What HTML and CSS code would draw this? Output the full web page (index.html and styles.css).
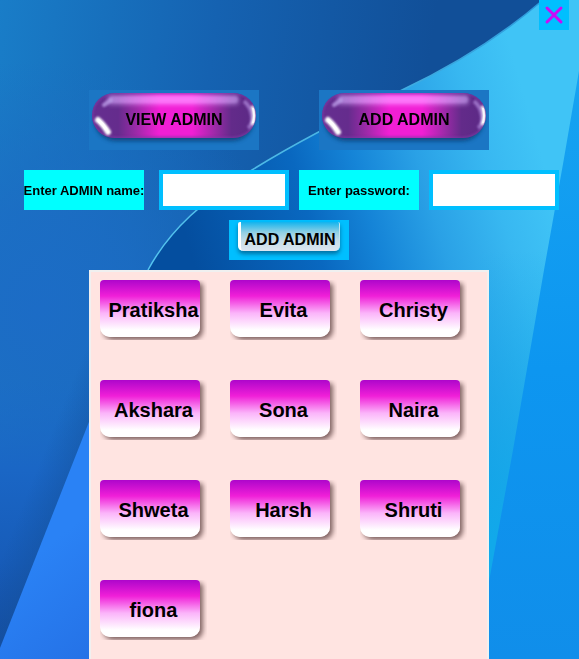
FILE: index.html
```html
<!DOCTYPE html>
<html lang="en">
<head>
<meta charset="utf-8">
<title>Admin</title>
<link rel="stylesheet" href="styles.css">
</head>
<body>
<svg class="backdrop" viewBox="0 0 579 659" preserveAspectRatio="none" aria-hidden="true">
  <defs>
    <linearGradient id="sky" x1="0" y1="0" x2="430" y2="60" gradientUnits="userSpaceOnUse">
      <stop offset="0" stop-color="#197dc8"/>
      <stop offset="0.5" stop-color="#1562b1"/>
      <stop offset="1" stop-color="#114f98"/>
    </linearGradient>
    <radialGradient id="leftGlow" cx="40" cy="310" r="250" gradientUnits="userSpaceOnUse">
      <stop offset="0" stop-color="#1c6cc6"/>
      <stop offset="0.4" stop-color="#1c6cc4" stop-opacity="0.8"/>
      <stop offset="1" stop-color="#1c6cc0" stop-opacity="0"/>
    </radialGradient>
    <linearGradient id="leftLow" x1="0" y1="380" x2="0" y2="640" gradientUnits="userSpaceOnUse">
      <stop offset="0" stop-color="#1c69c9" stop-opacity="0"/>
      <stop offset="0.35" stop-color="#1a66c5"/>
      <stop offset="0.7" stop-color="#175cb9"/>
      <stop offset="1" stop-color="#154fa5"/>
    </linearGradient>
    <linearGradient id="foldLow" x1="16" y1="520" x2="58" y2="537" gradientUnits="userSpaceOnUse">
      <stop offset="0" stop-color="#12509c" stop-opacity="0"/>
      <stop offset="1" stop-color="#155098" stop-opacity="0.6"/>
    </linearGradient>
    <linearGradient id="wave" x1="190" y1="250" x2="540" y2="150" gradientUnits="userSpaceOnUse">
      <stop offset="0" stop-color="#044e9f"/>
      <stop offset="0.34" stop-color="#0968c0"/>
      <stop offset="0.5" stop-color="#1584d7"/>
      <stop offset="0.67" stop-color="#2aa1e6"/>
      <stop offset="0.85" stop-color="#38b8f1"/>
      <stop offset="1" stop-color="#40c4f6"/>
    </linearGradient>
    <linearGradient id="waveLow" x1="0" y1="250" x2="0" y2="540" gradientUnits="userSpaceOnUse">
      <stop offset="0" stop-color="#11a9ea" stop-opacity="0"/>
      <stop offset="1" stop-color="#11a9ea"/>
    </linearGradient>
    <linearGradient id="right" x1="0" y1="80" x2="0" y2="659" gradientUnits="userSpaceOnUse">
      <stop offset="0" stop-color="#16a3f1"/>
      <stop offset="0.5" stop-color="#0d96f0"/>
      <stop offset="1" stop-color="#108eea"/>
    </linearGradient>
    <linearGradient id="wedge" x1="30" y1="560" x2="110" y2="659" gradientUnits="userSpaceOnUse">
      <stop offset="0" stop-color="#2a82f5"/>
      <stop offset="1" stop-color="#2470e5"/>
    </linearGradient>
    <linearGradient id="rim" x1="540" y1="0" x2="149" y2="270" gradientUnits="userSpaceOnUse">
      <stop offset="0" stop-color="#2c9bdc"/>
      <stop offset="0.5" stop-color="#49b4e2"/>
      <stop offset="1" stop-color="#54c4ef"/>
    </linearGradient>
  </defs>
  <rect width="579" height="659" fill="url(#sky)"/>
  <rect width="579" height="659" fill="url(#leftGlow)"/>
  <rect y="300" width="200" height="359" fill="url(#leftLow)"/>
  <path d="M0 280H150L0 659Z" fill="url(#foldLow)"/>
  <path d="M543 0C500 37 455 65 402 90C350 115 300 140 252 170C205 199 170 229 148 270V659H579V0Z" fill="url(#wave)"/>
  <path d="M480 230H560L480 630Z" fill="url(#waveLow)"/>
  <path d="M543 0C500 37 455 65 402 90C350 115 300 140 252 170C205 199 170 229 148 270" fill="none" stroke="url(#rim)" stroke-width="1.5"/>
  <path d="M579 71L563 164L544 270L513 450L490 576L474 659H579Z" fill="url(#right)"/>
  <path d="M98 399L0 648V659H150V399Z" fill="url(#wedge)"/>
</svg>

<svg class="defs" aria-hidden="true">
  <defs>
    <linearGradient id="pillFill">
      <stop offset="0" stop-color="#652e90"/>
      <stop offset="0.16" stop-color="#652c8d"/>
      <stop offset="0.27" stop-color="#9c2aa8"/>
      <stop offset="0.41" stop-color="#f11fd5"/>
      <stop offset="0.61" stop-color="#f11fd5"/>
      <stop offset="0.75" stop-color="#9c2aa8"/>
      <stop offset="0.85" stop-color="#632b8a"/>
      <stop offset="1" stop-color="#5b2985"/>
    </linearGradient>
    <linearGradient id="pillShine">
      <stop offset="0" stop-color="#c9a4f4" stop-opacity="0.7"/>
      <stop offset="0.4" stop-color="#ff84ff"/>
      <stop offset="0.65" stop-color="#ff84ff"/>
      <stop offset="1" stop-color="#c9a4f4" stop-opacity="0.7"/>
    </linearGradient>
    <filter id="soft1" x="0" y="0" width="170" height="60" filterUnits="userSpaceOnUse"><feGaussianBlur stdDeviation="1"/></filter>
    <filter id="soft2" x="0" y="0" width="170" height="60" filterUnits="userSpaceOnUse"><feGaussianBlur stdDeviation="2"/></filter>
    <clipPath id="pillClip"><rect x="3" y="3" width="164" height="45" rx="22.5"/></clipPath>
    <symbol id="pill" viewBox="0 0 170 60">
      <rect x="5" y="7" width="160" height="44" rx="22" fill="#0c3f75" opacity="0.85" filter="url(#soft2)"/>
      <rect x="3" y="3" width="164" height="45" rx="22.5" fill="url(#pillFill)"/>
      <g clip-path="url(#pillClip)">
        <rect x="3" y="3" width="164" height="45" rx="22.5" fill="none" stroke="#7d3aa5" stroke-width="3" opacity="0.7" filter="url(#soft1)"/>
        <rect x="18" y="5" width="132" height="10" rx="4" fill="url(#pillShine)" opacity="0.7" filter="url(#soft2)"/>
        <rect x="20" y="6" width="129" height="7" rx="3" fill="url(#pillShine)" opacity="0.5" filter="url(#soft1)"/>
        <path d="M15 15L22 10" fill="none" stroke="#b99ae6" stroke-width="4" stroke-linecap="round" opacity="0.8" filter="url(#soft1)"/>
        <path d="M9 30Q14 34 19 42" fill="none" stroke="#fff" stroke-width="6" stroke-linecap="round" filter="url(#soft1)"/>
        <path d="M10 31Q14 34 17 39" fill="none" stroke="#fff" stroke-width="3" stroke-linecap="round"/>
        <path d="M155 11Q162 17 163 26T159 38" fill="none" stroke="#a87fd4" stroke-width="4" opacity="0.8" filter="url(#soft1)"/>
        <path d="M163 16Q167 26 163 35" fill="none" stroke="#fff" stroke-width="3" filter="url(#soft1)"/>
        <path d="M164 18Q166 26 164 33" fill="none" stroke="#fff" stroke-width="2" opacity="0.8"/>
      </g>
    </symbol>
  </defs>
</svg>

<header class="topbar">
  <button class="close" type="button" aria-label="Close">
    <svg viewBox="0 0 30 30" aria-hidden="true"><path d="M8 8L22 22M22 8L8 22" stroke="#c90cf5" stroke-width="3" stroke-linecap="round"/></svg>
  </button>
</header>

<main class="content">
  <nav class="actions">
    <button class="pill" type="button"><svg aria-hidden="true" viewBox="0 0 170 60"><use href="#pill"/></svg><span>VIEW ADMIN</span></button>
    <button class="pill" type="button"><svg aria-hidden="true" viewBox="0 0 170 60"><use href="#pill"/></svg><span>ADD ADMIN</span></button>
  </nav>

  <form class="form">
    <div class="fields">
      <div class="field field-name">
        <label for="name">Enter ADMIN name:</label>
        <input id="name" type="text">
      </div>
      <div class="field">
        <label for="password">Enter password:</label>
        <input id="password" type="password">
      </div>
    </div>
    <button class="submit" type="button"><span>ADD ADMIN</span></button>
  </form>

  <section class="admins">
    <button class="admin" type="button">Pratiksha</button>
    <button class="admin" type="button">Evita</button>
    <button class="admin" type="button">Christy</button>
    <button class="admin" type="button">Akshara</button>
    <button class="admin" type="button">Sona</button>
    <button class="admin" type="button">Naira</button>
    <button class="admin" type="button">Shweta</button>
    <button class="admin" type="button">Harsh</button>
    <button class="admin" type="button">Shruti</button>
    <button class="admin" type="button">fiona</button>
  </section>
</main>
</body>
</html>
```
FILE: styles.css
```css
* {
  box-sizing: border-box;
}

body {
  margin: 0;
  min-height: 100vh;
  display: flex;
  flex-direction: column;
  font-family: "Liberation Sans", Arial, sans-serif;
  font-weight: bold;
  color: #000;
}

button {
  border: 0;
  padding: 0;
  font: inherit;
  color: inherit;
  cursor: pointer;
}

.backdrop {
  position: fixed;
  inset: 0;
  width: 100%;
  height: 100%;
  z-index: -1;
}

.defs {
  position: absolute;
  width: 0;
  height: 0;
}

.topbar {
  display: flex;
  justify-content: flex-end;
  padding-right: 10px;
}

.close {
  width: 30px;
  height: 30px;
  background: #00bfff;
}

.close svg {
  display: block;
}

.content {
  flex: 1;
  display: flex;
  flex-direction: column;
  padding: 60px 90px 0 89px;
}

.actions {
  display: flex;
  justify-content: space-between;
}

.pill {
  width: 170px;
  height: 60px;
  display: grid;
  place-items: center;
  background: #1b76c4;
  font-size: 16px;
}

.pill svg,
.pill span {
  grid-area: 1 / 1;
}

.pill svg {
  width: 170px;
  height: 60px;
}

.form {
  display: flex;
  flex-direction: column;
  align-items: center;
  gap: 10px;
  margin: 20px 0 10px;
}

.fields {
  align-self: stretch;
  display: flex;
  gap: 10px;
  margin: 0 -70px 0 -65px;
}

.field {
  flex: 1 1 260px;
  min-width: 0;
  display: flex;
  gap: 10px;
}

.field-name {
  flex-basis: 265px;
  gap: 15px;
}

.field label {
  flex: 0 0 120px;
  height: 40px;
  display: flex;
  align-items: center;
  justify-content: center;
  overflow: hidden;
  background: #0ff;
  font-size: 13px;
  white-space: nowrap;
}

.field input {
  flex: 1;
  width: 0;
  min-width: 0;
  height: 40px;
  border: 4px solid #00bfff;
  padding: 0 4px;
  background: #fff;
  font: inherit;
}

.submit {
  width: 120px;
  height: 40px;
  padding: 2px 9px 9px;
  background: #00bfff;
  font-size: 16px;
}

.submit span {
  display: flex;
  align-items: flex-end;
  justify-content: center;
  height: 29px;
  padding-bottom: 2px;
  border-left: 3px solid #fff;
  border-right: 1px solid #c3e4ef;
  border-radius: 2px 2px 5px 5px;
  background: linear-gradient(#12b4ee, #8fcfe4 35%, #c4dde8 65%, #dde6f1);
  box-shadow: 0 3px 4px rgba(0, 60, 100, 0.6);
  white-space: nowrap;
}

.admins {
  flex: 1;
  display: grid;
  grid-template-columns: repeat(auto-fill, 107px);
  grid-auto-rows: 60px;
  gap: 40px 23px;
  align-content: start;
  padding: 8px 0 19px 9px;
  border: 2px solid #f0f0f0;
  border-bottom: 0;
  background: #ffe4e1;
}

.admin {
  position: relative;
  z-index: 0;
  overflow: hidden;
  background: none;
  font-size: 20px;
}

.admin::before {
  content: "";
  position: absolute;
  inset: 0 7px 3px 0;
  z-index: -1;
  border-radius: 4px 4px 10px 10px;
  background: linear-gradient(#ae06cb, #f01fd8 28%, #fbb4fa 58%, #fff 88%);
  box-shadow: 3px 3px 5px rgba(60, 30, 30, 0.65);
}
```
